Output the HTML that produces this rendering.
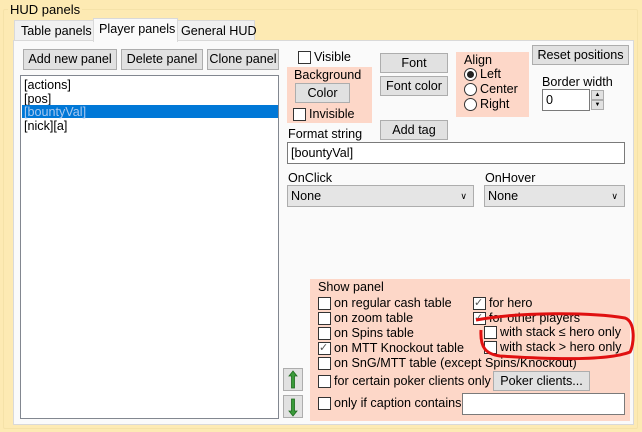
<!DOCTYPE html>
<html><head><meta charset="utf-8"><style>
*{box-sizing:border-box}
body{margin:0;width:642px;height:432px;background:#fdeab3;font-family:"Liberation Sans",sans-serif;font-size:12.6px;color:#000;position:relative;overflow:hidden}
.a{position:absolute;white-space:nowrap}
.btn{position:absolute;background:#e1e1e1;border:1px solid #adadad;text-align:center;line-height:18px;white-space:nowrap}
.cb{position:absolute;width:13px;height:13px;border:1px solid #333;background:#fff}
.sal{position:absolute;background:#fdd7c8}
.inp{position:absolute;background:#fff;border:1px solid #7a7a7a;padding-left:3px}
.rb{position:absolute;width:13px;height:13px;border:1px solid #333;border-radius:50%;background:#fff}
.combo{position:absolute;background:#e5e5e5;border:1px solid #adadad;padding-left:3px;line-height:20px}
</style></head><body>
<div class="a" style="left:3px;top:9px;width:635px;height:420px;border:1px solid #f5e2a8;border-radius:2px"></div>
<div class="a" style="left:8px;top:2px;background:#fdeab3;padding:0 2px;font-size:13px">HUD panels</div>
<div class="a" style="left:13px;top:40px;width:621px;height:385px;background:#fafafa;border:1px solid #d9d9d9"></div>
<div class="a" style="left:14px;top:20px;width:80px;height:21px;background:#f0f0f0;border:1px solid #d9d9d9;padding:3px 0 0 6px">Table panels</div>
<div class="a" style="left:177px;top:20px;width:78px;height:21px;background:#f0f0f0;border:1px solid #d9d9d9;padding:3px 0 0 3px">General HUD</div>
<div class="a" style="left:93px;top:18px;width:85px;height:24px;background:#fafafa;border:1px solid #d9d9d9;border-bottom:none;padding:3px 0 0 5px">Player panels</div>

<div class="btn" style="left:23px;top:49px;width:94px;height:21px">Add new panel</div>
<div class="btn" style="left:121px;top:49px;width:82px;height:21px">Delete panel</div>
<div class="btn" style="left:207px;top:49px;width:72px;height:21px">Clone panel</div>
<div class="a" style="left:20px;top:75px;width:259px;height:344px;background:#fff;border:1px solid #828790"></div>
<div class="a" style="left:24px;top:78px;line-height:14px">[actions]<br>[pos]</div>
<div class="a" style="left:22px;top:105px;width:256px;height:13px;background:#0078d7"></div>
<div class="a" style="left:24px;top:105px;line-height:14px;color:#a8c8f0">[bountyVal]</div>
<div class="a" style="left:24px;top:119px;line-height:14px">[nick][a]</div>

<div class="cb" style="left:298px;top:51px"></div><div class="a" style="left:314px;top:50px">Visible</div>
<div class="sal" style="left:287px;top:67px;width:85px;height:56px"></div>
<div class="a" style="left:294px;top:68px">Background</div>
<div class="btn" style="left:295px;top:83px;width:55px;height:20px">Color</div>
<div class="cb" style="left:293px;top:108px"></div><div class="a" style="left:309px;top:107px">Invisible</div>
<div class="btn" style="left:380px;top:53px;width:68px;height:20px">Font</div>
<div class="btn" style="left:380px;top:76px;width:68px;height:20px">Font color</div>
<div class="btn" style="left:380px;top:120px;width:68px;height:20px">Add tag</div>
<div class="sal" style="left:456px;top:52px;width:73px;height:65px"></div>
<div class="a" style="left:464px;top:53px">Align</div>
<div class="rb" style="left:464px;top:68px"><div style="width:7px;height:7px;border-radius:50%;background:#222;margin:2px"></div></div><div class="a" style="left:480px;top:67px">Left</div>
<div class="rb" style="left:464px;top:83px"></div><div class="a" style="left:480px;top:82px">Center</div>
<div class="rb" style="left:464px;top:98px"></div><div class="a" style="left:480px;top:97px">Right</div>
<div class="btn" style="left:532px;top:45px;width:97px;height:20px">Reset positions</div>
<div class="a" style="left:542px;top:75px">Border width</div>
<div class="inp" style="left:542px;top:89px;width:48px;height:22px;line-height:20px">0</div>
<div class="btn" style="left:591px;top:90px;width:13px;height:10px;font-size:6px;line-height:8px">▲</div>
<div class="btn" style="left:591px;top:100px;width:13px;height:10px;font-size:6px;line-height:8px">▼</div>
<div class="a" style="left:288px;top:127px">Format string</div>
<div class="inp" style="left:287px;top:142px;width:338px;height:22px;line-height:20px">[bountyVal]</div>
<div class="a" style="left:288px;top:171px">OnClick</div>
<div class="combo" style="left:287px;top:185px;width:187px;height:22px">None<span style="position:absolute;right:6px;font-size:9px">&#8744;</span></div>
<div class="a" style="left:485px;top:171px">OnHover</div>
<div class="combo" style="left:484px;top:185px;width:141px;height:22px">None<span style="position:absolute;right:6px;font-size:9px">&#8744;</span></div>

<div class="sal" style="left:310px;top:279px;width:320px;height:142px"></div>
<div class="a" style="left:318px;top:280px">Show panel</div>
<div class="cb" style="left:318px;top:297px"></div><div class="a" style="left:334px;top:296px">on regular cash table</div>
<div class="cb" style="left:318px;top:312px"></div><div class="a" style="left:334px;top:311px">on zoom table</div>
<div class="cb" style="left:318px;top:327px"></div><div class="a" style="left:334px;top:326px">on Spins table</div>
<div class="cb" style="left:318px;top:342px;font-size:11px;line-height:11px;color:#555">✓</div><div class="a" style="left:334px;top:341px">on MTT Knockout table</div>
<div class="cb" style="left:318px;top:357px"></div><div class="a" style="left:334px;top:356px">on SnG/MTT table (except Spins/Knockout)</div>
<div class="cb" style="left:318px;top:375px"></div><div class="a" style="left:334px;top:374px">for certain poker clients only</div>
<div class="btn" style="left:493px;top:371px;width:97px;height:20px">Poker clients...</div>
<div class="cb" style="left:318px;top:397px"></div><div class="a" style="left:334px;top:396px">only if caption contains</div>
<div class="inp" style="left:462px;top:393px;width:163px;height:22px"></div>
<div class="cb" style="left:473px;top:297px;font-size:11px;line-height:11px;color:#555">✓</div><div class="a" style="left:489px;top:296px">for hero</div>
<div class="cb" style="left:473px;top:312px;font-size:11px;line-height:11px;color:#555">✓</div><div class="a" style="left:489px;top:311px">for other players</div>
<div class="cb" style="left:484px;top:326px"></div><div class="a" style="left:500px;top:325px">with stack ≤ hero only</div>
<div class="cb" style="left:484px;top:341px"></div><div class="a" style="left:500px;top:340px">with stack &gt; hero only</div>
<svg class="a" style="left:0;top:0" width="642" height="432"><path d="M476 320 C520 312 590 312 625 318 C636 322 634 345 630 352 C610 360 560 360 500 356 C486 354 480 348 481 330" fill="none" stroke="#e01010" stroke-width="3"/></svg>

<div class="btn" style="left:283px;top:368px;width:20px;height:23px"></div>
<svg class="a" style="left:286px;top:370px" width="14" height="20"><path d="M7 1 L11 6 H8.5 V18 H5.5 V6 H3 Z" fill="#3a9a3a" stroke="#1d6b1d" stroke-width=".8"/></svg>
<div class="btn" style="left:283px;top:395px;width:20px;height:23px"></div>
<svg class="a" style="left:286px;top:397px" width="14" height="20"><path d="M7 19 L11 14 H8.5 V2 H5.5 V14 H3 Z" fill="#3a9a3a" stroke="#1d6b1d" stroke-width=".8"/></svg>
</body></html>
